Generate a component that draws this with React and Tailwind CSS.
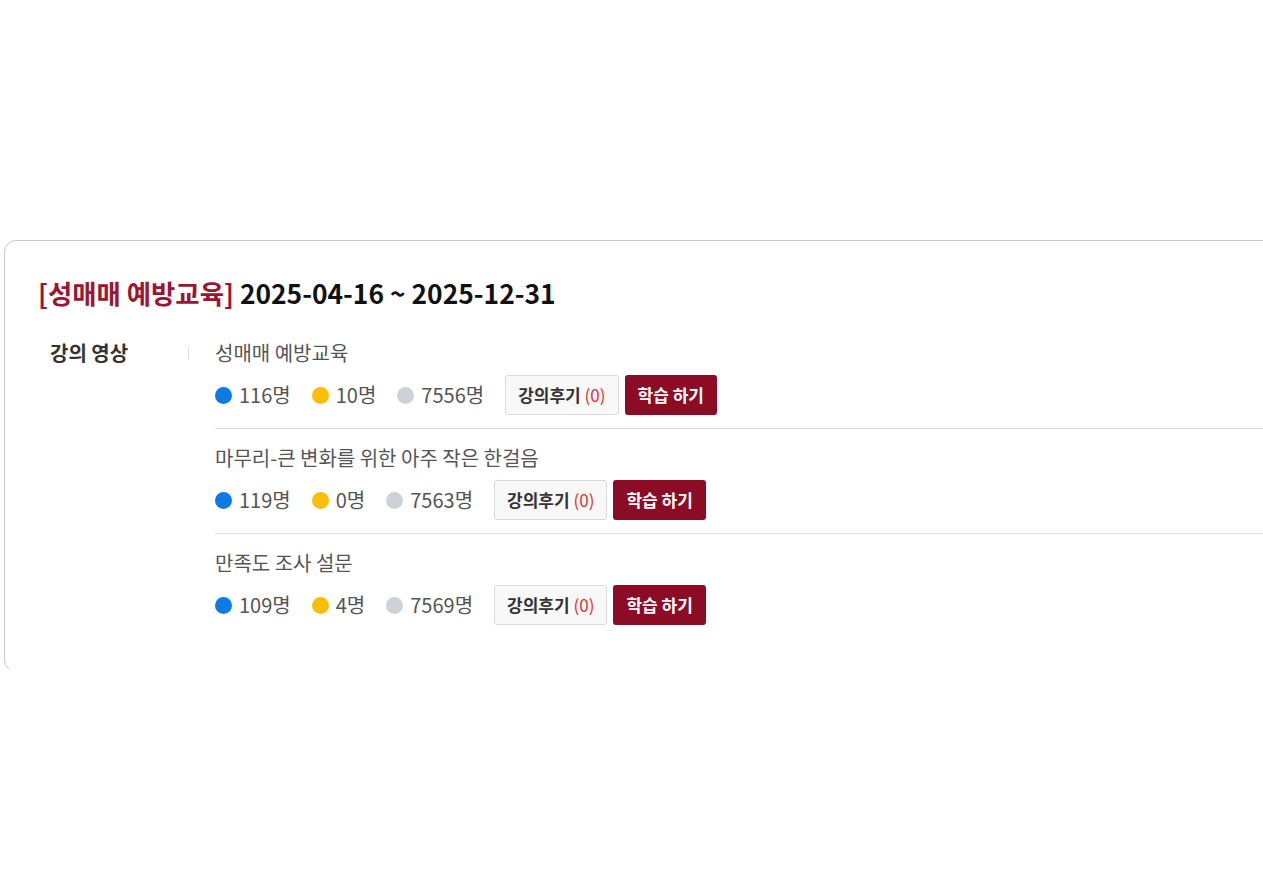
import React from 'react'

const LECTURES = [
  { title: '성매매 예방교육', done: 116, ing: 10, none: 7556, reviews: 0 },
  { title: '마무리-큰 변화를 위한 아주 작은 한걸음', done: 119, ing: 0, none: 7563, reviews: 0 },
  { title: '만족도 조사 설문', done: 109, ing: 4, none: 7569, reviews: 0 },
]

function Stat({ color, value }) {
  return (
    <span className="flex items-center gap-[7px] text-[20px] text-[#555] leading-none">
      <span className={`w-[17px] h-[17px] rounded-full ${color}`} />
      {value}명
    </span>
  )
}

function LectureRow({ item, first, last }) {
  return (
    <div className={`${first ? '' : 'pt-4'} ${last ? '' : 'pb-[13px] border-b border-[#dcdcdc]'}`}>
      <div className="text-[20px] leading-[26px] text-[#555]">{item.title}</div>
      <div className="flex items-center mt-[9px]">
        <div className="flex items-center gap-[21px]">
          <Stat color="bg-[#0d7be6]" value={item.done} />
          <Stat color="bg-[#fbbd0a]" value={item.ing} />
          <Stat color="bg-[#ced2d8]" value={item.none} />
        </div>
        <button className="ml-[21px] h-10 px-3 border border-[#d9d9d9] bg-[#f8f8f8] rounded-[3px] text-[17px] font-bold text-[#333]">
          강의후기 <span className="font-normal text-[#e0312f]">({item.reviews})</span>
        </button>
        <button className="ml-[6px] h-10 px-[13px] bg-[#8c0c25] rounded-[3px] text-[17px] font-bold text-white">
          학습 하기
        </button>
      </div>
    </div>
  )
}

export default function App() {
  return (
    <div
      className="w-full min-h-[893px] bg-white overflow-hidden pt-[240px] pl-[4px]"
      style={{ fontFamily: '"Noto Sans CJK KR", "Noto Sans", sans-serif' }}
    >
      <div className="h-[429px] overflow-hidden">
        <div className="w-[1300px] h-[432px] border border-[#c9c9c9] rounded-xl pt-[34px] pl-[33px]">
          <h2 className="text-[26.4px] leading-[36px] font-bold text-[#111]">
            <span className="text-[#9c1631]">[성매매 예방교육]</span> 2025-04-16 ~ 2025-12-31
          </h2>
          <div className="flex mt-[29px]">
            <div className="w-[150px] pl-3 text-[20px] leading-[26px] font-bold text-[#333]">강의 영상</div>
            <div className="w-px h-[14px] bg-[#dddddd] mt-[6px]" />
            <div className="flex-1 ml-[26px]">
              {LECTURES.map((item, i) => (
                <LectureRow key={i} item={item} first={i === 0} last={i === LECTURES.length - 1} />
              ))}
            </div>
          </div>
        </div>
      </div>
    </div>
  )
}
